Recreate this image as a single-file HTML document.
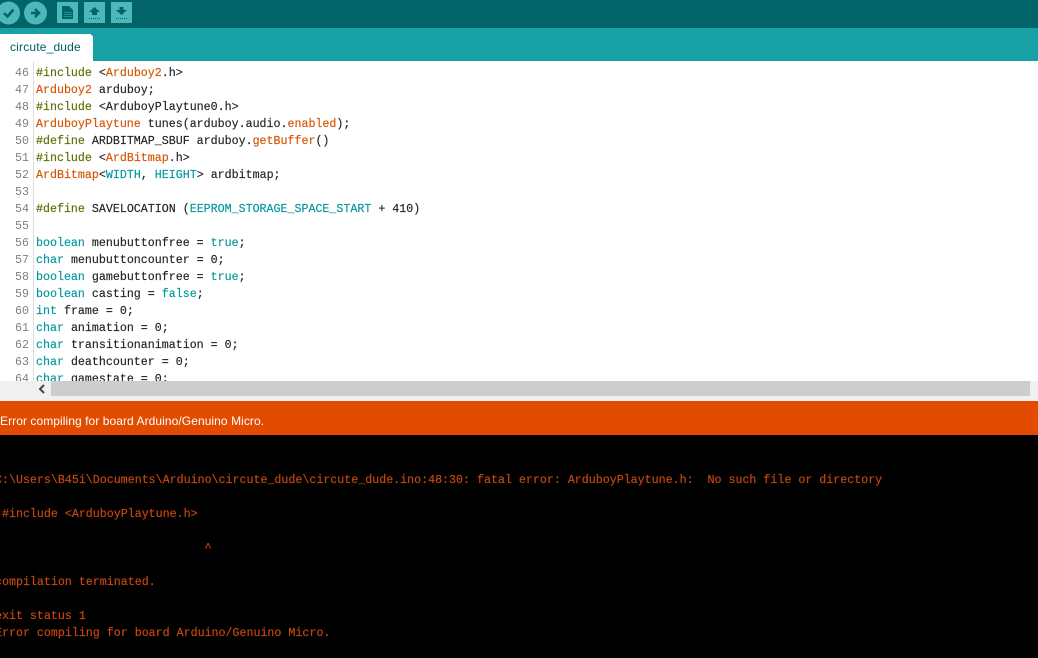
<!DOCTYPE html>
<html><head><meta charset="utf-8"><style>
html,body{margin:0;padding:0;background:#fff}
#r{position:relative;width:1038px;height:658px;overflow:hidden;background:#fff}
.a{position:absolute}
.m{font-family:"Liberation Mono",monospace;font-size:11.65px;line-height:17px;white-space:pre;position:absolute;height:17px;margin-top:1px}
.c{left:36px;color:#222;-webkit-text-stroke:.15px currentColor}
.n{left:0;width:29px;text-align:right;color:#808080}
.o{left:-5px;color:#c9480f;-webkit-text-stroke:.15px currentColor}
i{font-style:normal}
.k{color:#00979c}.f{color:#d35400}.p{color:#5e6d03}
</style></head><body><div id="r">
<div class="a" style="left:0;top:0;width:1038px;height:28px;background:#006468"></div>
<div class="a" style="left:0;top:28px;width:1038px;height:33px;background:#17a1a5"></div>
<div class="a" style="left:0;top:34px;width:93px;height:27px;background:#fff;border-radius:0 4px 0 0"></div>
<div class="a" style="left:10px;top:40px;font:12px/14px 'Liberation Sans',sans-serif;letter-spacing:.18px;color:#005c5f">circute_dude</div>
<svg class="a" style="left:0;top:0" width="140" height="28" viewBox="0 0 140 28">
<circle cx="8.500" cy="13" r="11.500" fill="#4db8bb"/><circle cx="35.500" cy="13" r="11.500" fill="#4db8bb"/>
<path d="M4 13l3.500 3.500 6-7" fill="none" stroke="#006468" stroke-width="2.500"/>
<path d="M31 13h7M35 9l4 4-4 4" fill="none" stroke="#006468" stroke-width="2.500"/>
<rect x="57" y="2" width="21" height="21" fill="#4db8bb"/><rect x="84" y="2" width="21" height="21" fill="#4db8bb"/><rect x="111" y="2" width="21" height="21" fill="#4db8bb"/>
<path d="M62 6h7l4 4v9H62z" fill="#006468"/><path d="M64.500 12.500h7M64.500 14.500h7M64.500 16.500h7" stroke="#4db8bb" stroke-width="1" stroke-dasharray="1 1"/>
<path d="M94.500 7l5.500 5h-3v3h-5v-3h-3z" fill="#006468"/><path d="M89 18.500h11" stroke="#006468" stroke-dasharray="1 1"/>
<path d="M119.500 7h4v3h3.500l-5.500 5-5.500-5h3.500z" fill="#006468"/><path d="M116 18.500h11" stroke="#006468" stroke-dasharray="1 1"/>
</svg>
<div class="a" style="left:33px;top:61px;width:1px;height:320px;background:#ddd"></div>
<div class="m n" style="top:64px">46</div><div class="m c" style="top:64px"><i class="p">#include</i> &lt;<i class="f">Arduboy2</i>.h&gt;</div>
<div class="m n" style="top:81px">47</div><div class="m c" style="top:81px"><i class="f">Arduboy2</i> arduboy;</div>
<div class="m n" style="top:98px">48</div><div class="m c" style="top:98px"><i class="p">#include</i> &lt;ArduboyPlaytune0.h&gt;</div>
<div class="m n" style="top:115px">49</div><div class="m c" style="top:115px"><i class="f">ArduboyPlaytune</i> tunes(arduboy.audio.<i class="f">enabled</i>);</div>
<div class="m n" style="top:132px">50</div><div class="m c" style="top:132px"><i class="p">#define</i> ARDBITMAP_SBUF arduboy.<i class="f">getBuffer</i>()</div>
<div class="m n" style="top:149px">51</div><div class="m c" style="top:149px"><i class="p">#include</i> &lt;<i class="f">ArdBitmap</i>.h&gt;</div>
<div class="m n" style="top:166px">52</div><div class="m c" style="top:166px"><i class="f">ArdBitmap</i>&lt;<i class="k">WIDTH</i>, <i class="k">HEIGHT</i>&gt; ardbitmap;</div>
<div class="m n" style="top:183px">53</div>
<div class="m n" style="top:200px">54</div><div class="m c" style="top:200px"><i class="p">#define</i> SAVELOCATION (<i class="k">EEPROM_STORAGE_SPACE_START</i> + 410)</div>
<div class="m n" style="top:217px">55</div>
<div class="m n" style="top:234px">56</div><div class="m c" style="top:234px"><i class="k">boolean</i> menubuttonfree = <i class="k">true</i>;</div>
<div class="m n" style="top:251px">57</div><div class="m c" style="top:251px"><i class="k">char</i> menubuttoncounter = 0;</div>
<div class="m n" style="top:268px">58</div><div class="m c" style="top:268px"><i class="k">boolean</i> gamebuttonfree = <i class="k">true</i>;</div>
<div class="m n" style="top:285px">59</div><div class="m c" style="top:285px"><i class="k">boolean</i> casting = <i class="k">false</i>;</div>
<div class="m n" style="top:302px">60</div><div class="m c" style="top:302px"><i class="k">int</i> frame = 0;</div>
<div class="m n" style="top:319px">61</div><div class="m c" style="top:319px"><i class="k">char</i> animation = 0;</div>
<div class="m n" style="top:336px">62</div><div class="m c" style="top:336px"><i class="k">char</i> transitionanimation = 0;</div>
<div class="m n" style="top:353px">63</div><div class="m c" style="top:353px"><i class="k">char</i> deathcounter = 0;</div>
<div class="m n" style="top:370px">64</div><div class="m c" style="top:370px"><i class="k">char</i> gamestate = 0;</div>
<div class="a" style="left:0;top:381px;width:1038px;height:20px;background:#f0f0f0"></div>
<div class="a" style="left:51px;top:381px;width:979px;height:15px;background:#cdcdcd"></div>
<svg class="a" style="left:36px;top:383px" width="15" height="12" viewBox="0 0 15 12"><path d="M8 2L4 6l4 4" fill="none" stroke="#444" stroke-width="2"/></svg>
<div class="a" style="left:0;top:401px;width:1038px;height:34px;background:#e34c00"></div>
<div class="a" style="left:0;top:414px;font:12px/14px 'Liberation Sans',sans-serif;letter-spacing:.07px;color:#fff;white-space:pre">Error compiling for board Arduino/Genuino Micro.</div>
<div class="a" style="left:0;top:435px;width:1038px;height:223px;background:#000"></div>
<div class="m o" style="top:471px">C:\Users\B45i\Documents\Arduino\circute_dude\circute_dude.ino:48:30: fatal error: ArduboyPlaytune.h:  No such file or directory</div>
<div class="m o" style="top:505px"> #include &lt;ArduboyPlaytune.h&gt;</div>
<div class="m o" style="top:539px">                              ^</div>
<div class="m o" style="top:573px">compilation terminated.</div>
<div class="m o" style="top:607px">exit status 1</div>
<div class="m o" style="top:624px">Error compiling for board Arduino/Genuino Micro.</div>
</div></body></html>
